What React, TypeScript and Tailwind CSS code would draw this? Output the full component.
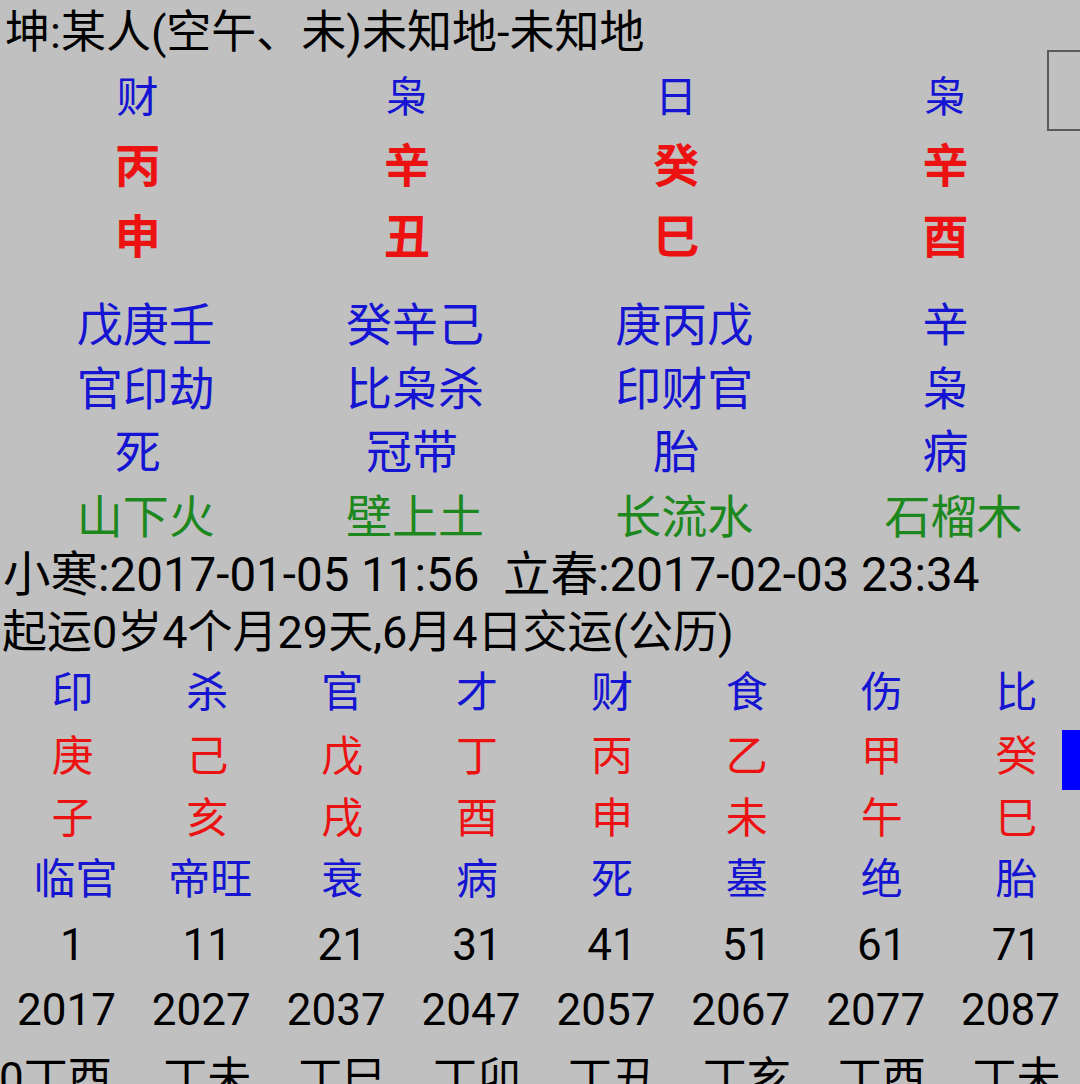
import React from 'react';

const FONT = "font-['Roboto','Noto_Sans_CJK_SC',sans-serif]";

const PILLARS = [
  { god: '财', stem: '丙', branch: '申', hidden: '戊庚壬', hgods: '官印劫', stage: '死', nayin: '山下火' },
  { god: '枭', stem: '辛', branch: '丑', hidden: '癸辛己', hgods: '比枭杀', stage: '冠带', nayin: '壁上土' },
  { god: '日', stem: '癸', branch: '巳', hidden: '庚丙戊', hgods: '印财官', stage: '胎', nayin: '长流水' },
  { god: '枭', stem: '辛', branch: '酉', hidden: '辛', hgods: '枭', stage: '病', nayin: '石榴木' },
];

const LUCK = [
  { god: '印', stem: '庚', branch: '子', stage: '临官', age: '1', year: '2017', liu: '0丁酉' },
  { god: '杀', stem: '己', branch: '亥', stage: '帝旺', age: '11', year: '2027', liu: '丁未' },
  { god: '官', stem: '戊', branch: '戌', stage: '衰', age: '21', year: '2037', liu: '丁巳' },
  { god: '才', stem: '丁', branch: '酉', stage: '病', age: '31', year: '2047', liu: '丁卯' },
  { god: '财', stem: '丙', branch: '申', stage: '死', age: '41', year: '2057', liu: '丁丑' },
  { god: '食', stem: '乙', branch: '未', stage: '墓', age: '51', year: '2067', liu: '丁亥' },
  { god: '伤', stem: '甲', branch: '午', stage: '绝', age: '61', year: '2077', liu: '丁酉' },
  { god: '比', stem: '癸', branch: '巳', stage: '胎', age: '71', year: '2087', liu: '丁未' },
];

// longer cells sit a little right of the column centre in the original
function nudge4(s: string) {
  if (s.length >= 3) return 'translate-x-[8px]';
  if (s.length === 2) return 'translate-x-[5px]';
  return '';
}

function nudge8(s: string, wide: boolean) {
  if (s.startsWith('0')) return '-translate-x-[17px]';
  if (/^\d{4}$/.test(s)) return '-translate-x-[6px]';
  if (wide && s.length === 2) return 'translate-x-[3px]';
  return '';
}

function Row4({ h, cls, pick }: { h: string; cls: string; pick: (p: (typeof PILLARS)[number]) => string }) {
  return (
    <div className={`grid grid-cols-4 w-[1080px] pl-[3px] ${h}`}>
      {PILLARS.map((p, i) => (
        <div key={i} className={`flex items-center justify-center whitespace-nowrap ${cls}`}>
          <span className={nudge4(pick(p))}>{pick(p)}</span>
        </div>
      ))}
    </div>
  );
}

function Row8({
  h,
  cls,
  pick,
  wide = false,
}: {
  h: string;
  cls: string;
  pick: (l: (typeof LUCK)[number]) => string;
  wide?: boolean;
}) {
  return (
    <div className={`grid grid-cols-8 w-[1079px] ml-[5px] ${h}`}>
      {LUCK.map((l, i) => (
        <div key={i} className={`flex items-center justify-center whitespace-nowrap ${cls}`}>
          <span className={nudge8(pick(l), wide)}>{pick(l)}</span>
        </div>
      ))}
    </div>
  );
}

export default function App() {
  const blue = 'text-[#1414d2] text-[42px] leading-none';
  const blue4 = 'text-[#1414d2] text-[46px] leading-none';
  const red = 'text-[#ec1212] text-[46px] font-bold leading-none';
  const red8 = 'text-[#ec1212] text-[42px] leading-none';
  const black8 = 'text-black text-[44px] leading-none';
  return (
    <div className={`relative w-[1080px] h-[1084px] overflow-hidden bg-[#c0c0c0] ${FONT}`}>
      <div className="h-[64px] flex items-center pl-[5px] text-[45px] leading-none text-black whitespace-nowrap">
        坤:某人(空午、未)未知地-未知地
      </div>

      <Row4 h="h-[68px]" cls={blue} pick={(p) => p.god} />
      <Row4 h="h-[68px]" cls={red} pick={(p) => p.stem} />
      <Row4 h="h-[74px]" cls={red} pick={(p) => p.branch} />
      <div className="h-[19px]" />
      <Row4 h="h-[64px]" cls={blue4} pick={(p) => p.hidden} />
      <Row4 h="h-[63px]" cls={blue4} pick={(p) => p.hgods} />
      <Row4 h="h-[64px]" cls={blue4} pick={(p) => p.stage} />
      <Row4 h="h-[65px]" cls="text-[#1d881d] text-[46px] leading-none" pick={(p) => p.nayin} />

      <div className="h-[54px] flex items-center pl-[3px] text-[47.5px] leading-none text-black whitespace-pre">
        {'小寒:2017-01-05 11:56  立春:2017-02-03 23:34'}
      </div>
      <div className="h-[58px] flex items-center pl-[2px] text-[45px] leading-none text-black whitespace-pre">
        起运0岁4个月29天,6月4日交运(公历)
      </div>

      <Row8 h="h-[64px]" cls={blue} pick={(l) => l.god} />
      <Row8 h="h-[64px]" cls={red8} pick={(l) => l.stem} />
      <Row8 h="h-[60px]" cls={red8} pick={(l) => l.branch} />
      <Row8 h="h-[62px]" cls={blue} pick={(l) => l.stage} wide />
      <Row8 h="h-[68px]" cls={black8} pick={(l) => l.age} />
      <Row8 h="h-[62px]" cls={black8} pick={(l) => l.year} />
      <Row8 h="h-[76px]" cls={black8} pick={(l) => l.liu} />

      <div className="absolute left-[1047px] top-[50px] w-[40px] h-[81px] border-2 border-[#5a5a5a]" />
      <div className="absolute left-[1062px] top-[730px] w-[18px] h-[60px] bg-[#0000ff]" />
    </div>
  );
}
